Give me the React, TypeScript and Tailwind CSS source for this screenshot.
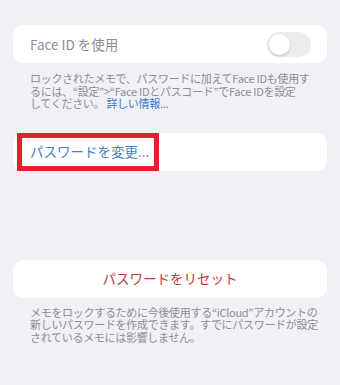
const jp = { fontFamily: '"Noto Sans CJK JP", "Noto Sans", sans-serif' }

function Toggle() {
    return (
        <div className="w-[44px] h-[25px] rounded-full bg-[#ececee] p-[2px] flex items-center">
            <div className="w-[21px] h-[21px] rounded-full bg-white shadow-[0_1px_3px_rgba(0,0,0,0.18)]" />
        </div>
    )
}

function Note({ lines }: { lines: React.ReactNode[] }) {
    return (
        <div className="px-[17px] text-[11px] leading-[13px] text-[#8e8e93] whitespace-nowrap tracking-[-0.3px]">
            {lines.map((l, i) => (
                <div key={i} className="h-[12.5px]">{l}</div>
            ))}
        </div>
    )
}

export default function App() {
    return (
        <div className="w-[340px] h-[385px] bg-[#f0f0f5] pt-[25px] px-[13px] overflow-hidden" style={jp}>
            <div className="h-[38px] bg-white rounded-[10px] flex items-center justify-between pl-[17px] pr-[16px]">
                <span className="text-[13.5px] text-[#8d8d91]">Face ID を使用</span>
                <Toggle />
            </div>

            <div className="mt-[9px]">
                <Note lines={[
                    "ロックされたメモで、パスワードに加えてFace IDも使用す",
                    "るには、“設定”>“Face IDとパスコード”でFace IDを設定",
                    <>してください。 <span className="text-[#3a78c9]">詳しい情報...</span></>,
                ]} />
            </div>

            <div className="mt-[23px] h-[38px] bg-white rounded-[10px] flex items-center">
                <div className="h-[38px] w-[142px] ml-[4px] border-[5px] border-[#e3202b] flex items-center pl-[8px]">
                    <span className="text-[13.5px] text-[#4a7dbd] whitespace-nowrap">パスワードを変更...</span>
                </div>
            </div>

            <div className="mt-[89px] h-[38px] bg-white rounded-[10px] flex items-center justify-center">
                <span className="text-[13.5px] text-[#b83a3a]">パスワードをリセット</span>
            </div>

            <div className="mt-[8px]">
                <Note lines={[
                    "メモをロックするために今後使用する“iCloud”アカウントの",
                    "新しいパスワードを作成できます。すでにパスワードが設定",
                    "されているメモには影響しません。",
                ]} />
            </div>
        </div>
    )
}
